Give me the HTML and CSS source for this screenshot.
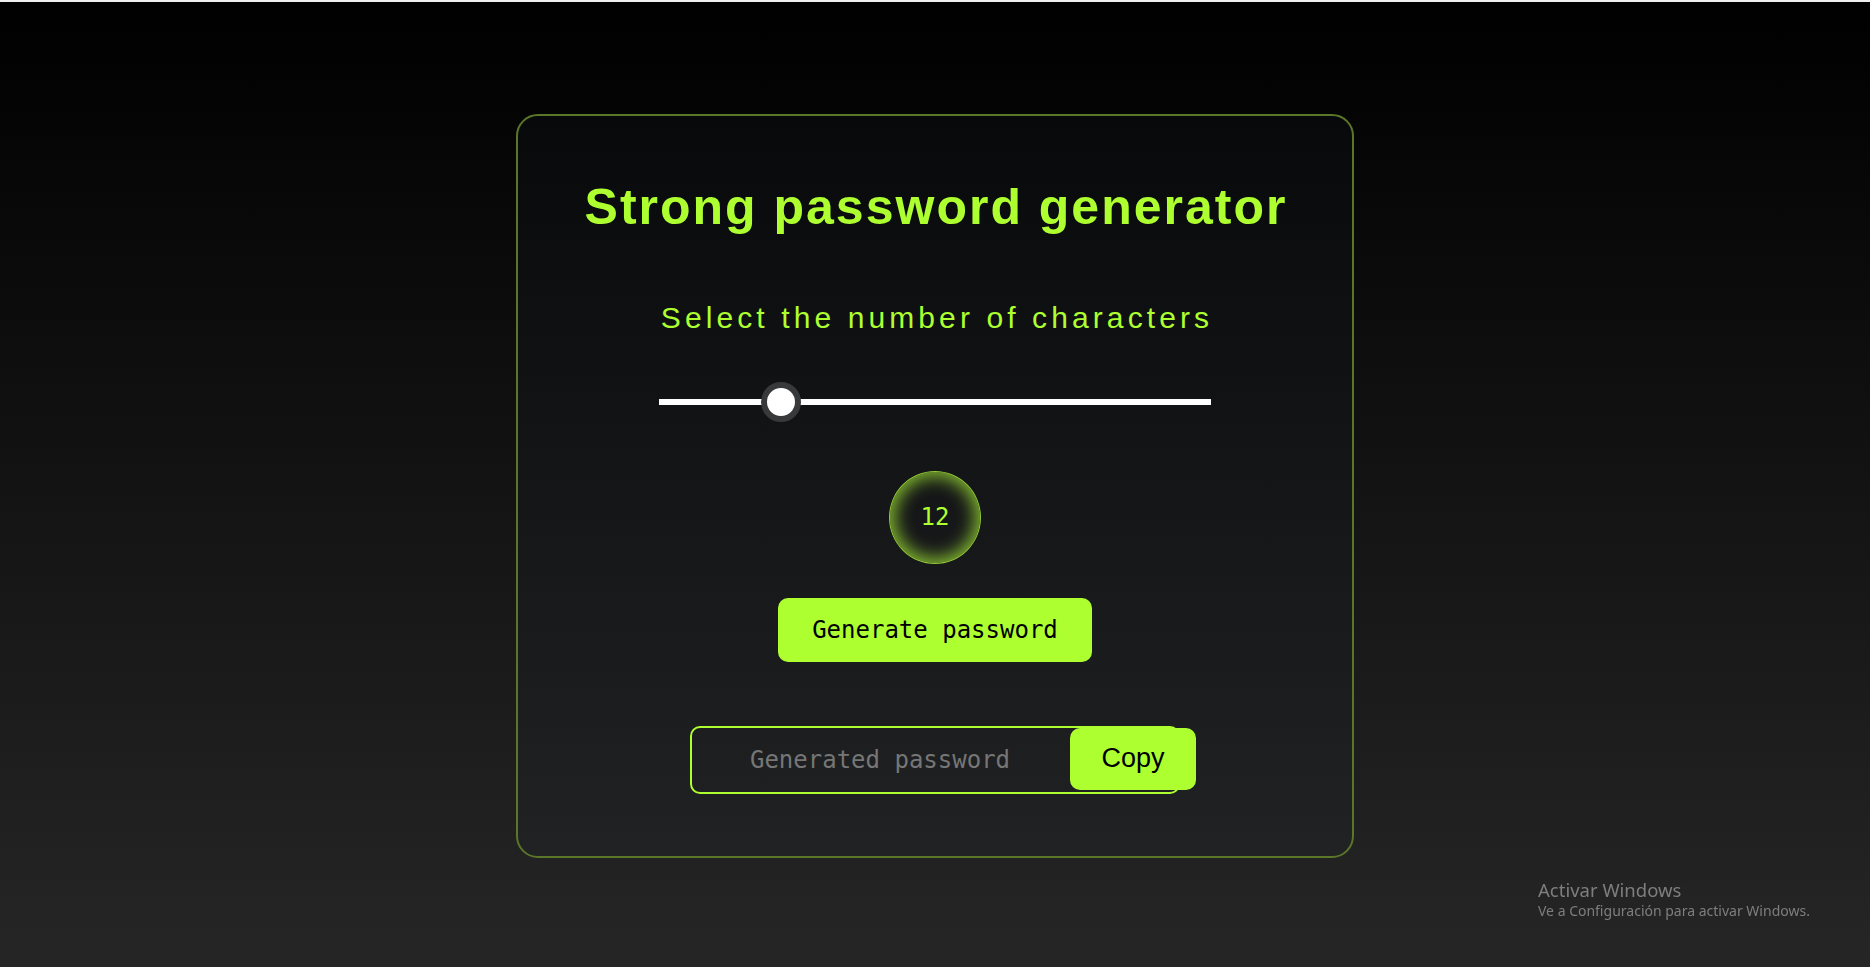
FILE: index.html
```html
<!DOCTYPE html>
<html lang="en">
<head>
<meta charset="utf-8">
<title>Strong password generator</title>
<link rel="stylesheet" href="styles.css">
</head>
<body>
  <main class="card">
    <h1 class="title">Strong password generator</h1>
    <p class="subtitle">Select the number of characters</p>
    <input class="range" type="range" min="8" max="28" value="12">
    <div class="count">12</div>
    <button class="generate" type="button">Generate password</button>
    <div class="output">
      <input class="password" type="text" placeholder="Generated password" readonly>
      <button class="copy" type="button">Copy</button>
    </div>
  </main>
  <div class="watermark">
    <div class="wm-title">Activar Windows</div>
    <div class="wm-sub">Ve a Configuración para activar Windows.</div>
  </div>
</body>
</html>
```

FILE: styles.css
```css
html, body {
  margin: 0;
  padding: 0;
}

body {
  box-sizing: border-box;
  min-height: 100vh;
  border-top: 2px solid #efefef;
  background: linear-gradient(180deg, #000000 0%, #262626 100%);
  display: flex;
  align-items: center;
  justify-content: center;
  padding-top: 2px;
  font-family: "Liberation Sans", Arial, sans-serif;
}

.card {
  box-sizing: border-box;
  width: 838px;
  border: 2px solid #5b7628;
  border-radius: 22px;
  background: linear-gradient(180deg, #08090b 0%, #212224 100%);
  display: flex;
  flex-direction: column;
  align-items: center;
  padding: 62px 0 62px;
}

.title {
  margin: 0;
  font-size: 50px;
  line-height: 58px;
  font-weight: 700;
  letter-spacing: 2px;
  color: #adff2f;
  padding-left: 2px;
}

.subtitle {
  margin: 65px 0 0;
  font-size: 30px;
  line-height: 34px;
  font-weight: 400;
  letter-spacing: 4.1px;
  color: #adff2f;
  padding-left: 4px;
}

.range {
  -webkit-appearance: none;
  appearance: none;
  width: 552px;
  height: 40px;
  margin: 47px 0 0;
  padding: 0;
  background: transparent;
  outline: none;
}

.range::-webkit-slider-runnable-track {
  height: 6px;
  background: #ffffff;
  border: none;
}

.range::-webkit-slider-thumb {
  -webkit-appearance: none;
  appearance: none;
  box-sizing: border-box;
  width: 40px;
  height: 40px;
  margin-top: -17px;
  border-radius: 50%;
  background: #ffffff;
  border: 6px solid #38393b;
}

.count {
  margin-top: 49px;
  width: 92px;
  height: 93px;
  box-sizing: border-box;
  border-radius: 50%;
  border: 1px solid rgba(160, 220, 60, 0.9);
  box-shadow: inset 0 0 18px 4px rgba(140, 200, 50, 0.95);
  display: flex;
  align-items: center;
  justify-content: center;
  font-family: "DejaVu Sans Mono", monospace;
  font-size: 24px;
  color: #adff2f;
}

.generate {
  margin-top: 34px;
  width: 314px;
  height: 64px;
  border: none;
  border-radius: 10px;
  background: #adff2f;
  color: #000;
  font-family: "DejaVu Sans Mono", monospace;
  font-size: 24px;
  padding: 0;
  cursor: pointer;
}

.output {
  margin-top: 64px;
  width: 490px;
  display: flex;
  align-items: flex-start;
}

.password {
  flex: 0 0 auto;
  box-sizing: border-box;
  width: 490px;
  height: 68px;
  border: 2px solid #adff2f;
  border-radius: 10px;
  background: transparent;
  padding: 0 110px 0 0;
  text-align: center;
  font-family: "DejaVu Sans Mono", monospace;
  font-size: 24px;
  color: #e0e0e0;
  outline: none;
}

.password::placeholder {
  color: #767676;
}

.copy {
  flex: 0 0 auto;
  position: relative;
  margin: 2px 0 0 -110px;
  width: 126px;
  height: 62px;
  border: none;
  border-radius: 10px;
  background: #adff2f;
  color: #000;
  font-family: "Liberation Sans", Arial, sans-serif;
  font-size: 27px;
  padding: 0;
  cursor: pointer;
}

.watermark {
  position: fixed;
  left: 1538px;
  top: 878px;
  color: #7e7e7e;
  font-family: "Noto Sans", "Open Sans", sans-serif;
  pointer-events: none;
}

.wm-title {
  font-size: 18.5px;
  line-height: 24px;
}

.wm-sub {
  font-size: 14px;
  line-height: 18px;
}
```
